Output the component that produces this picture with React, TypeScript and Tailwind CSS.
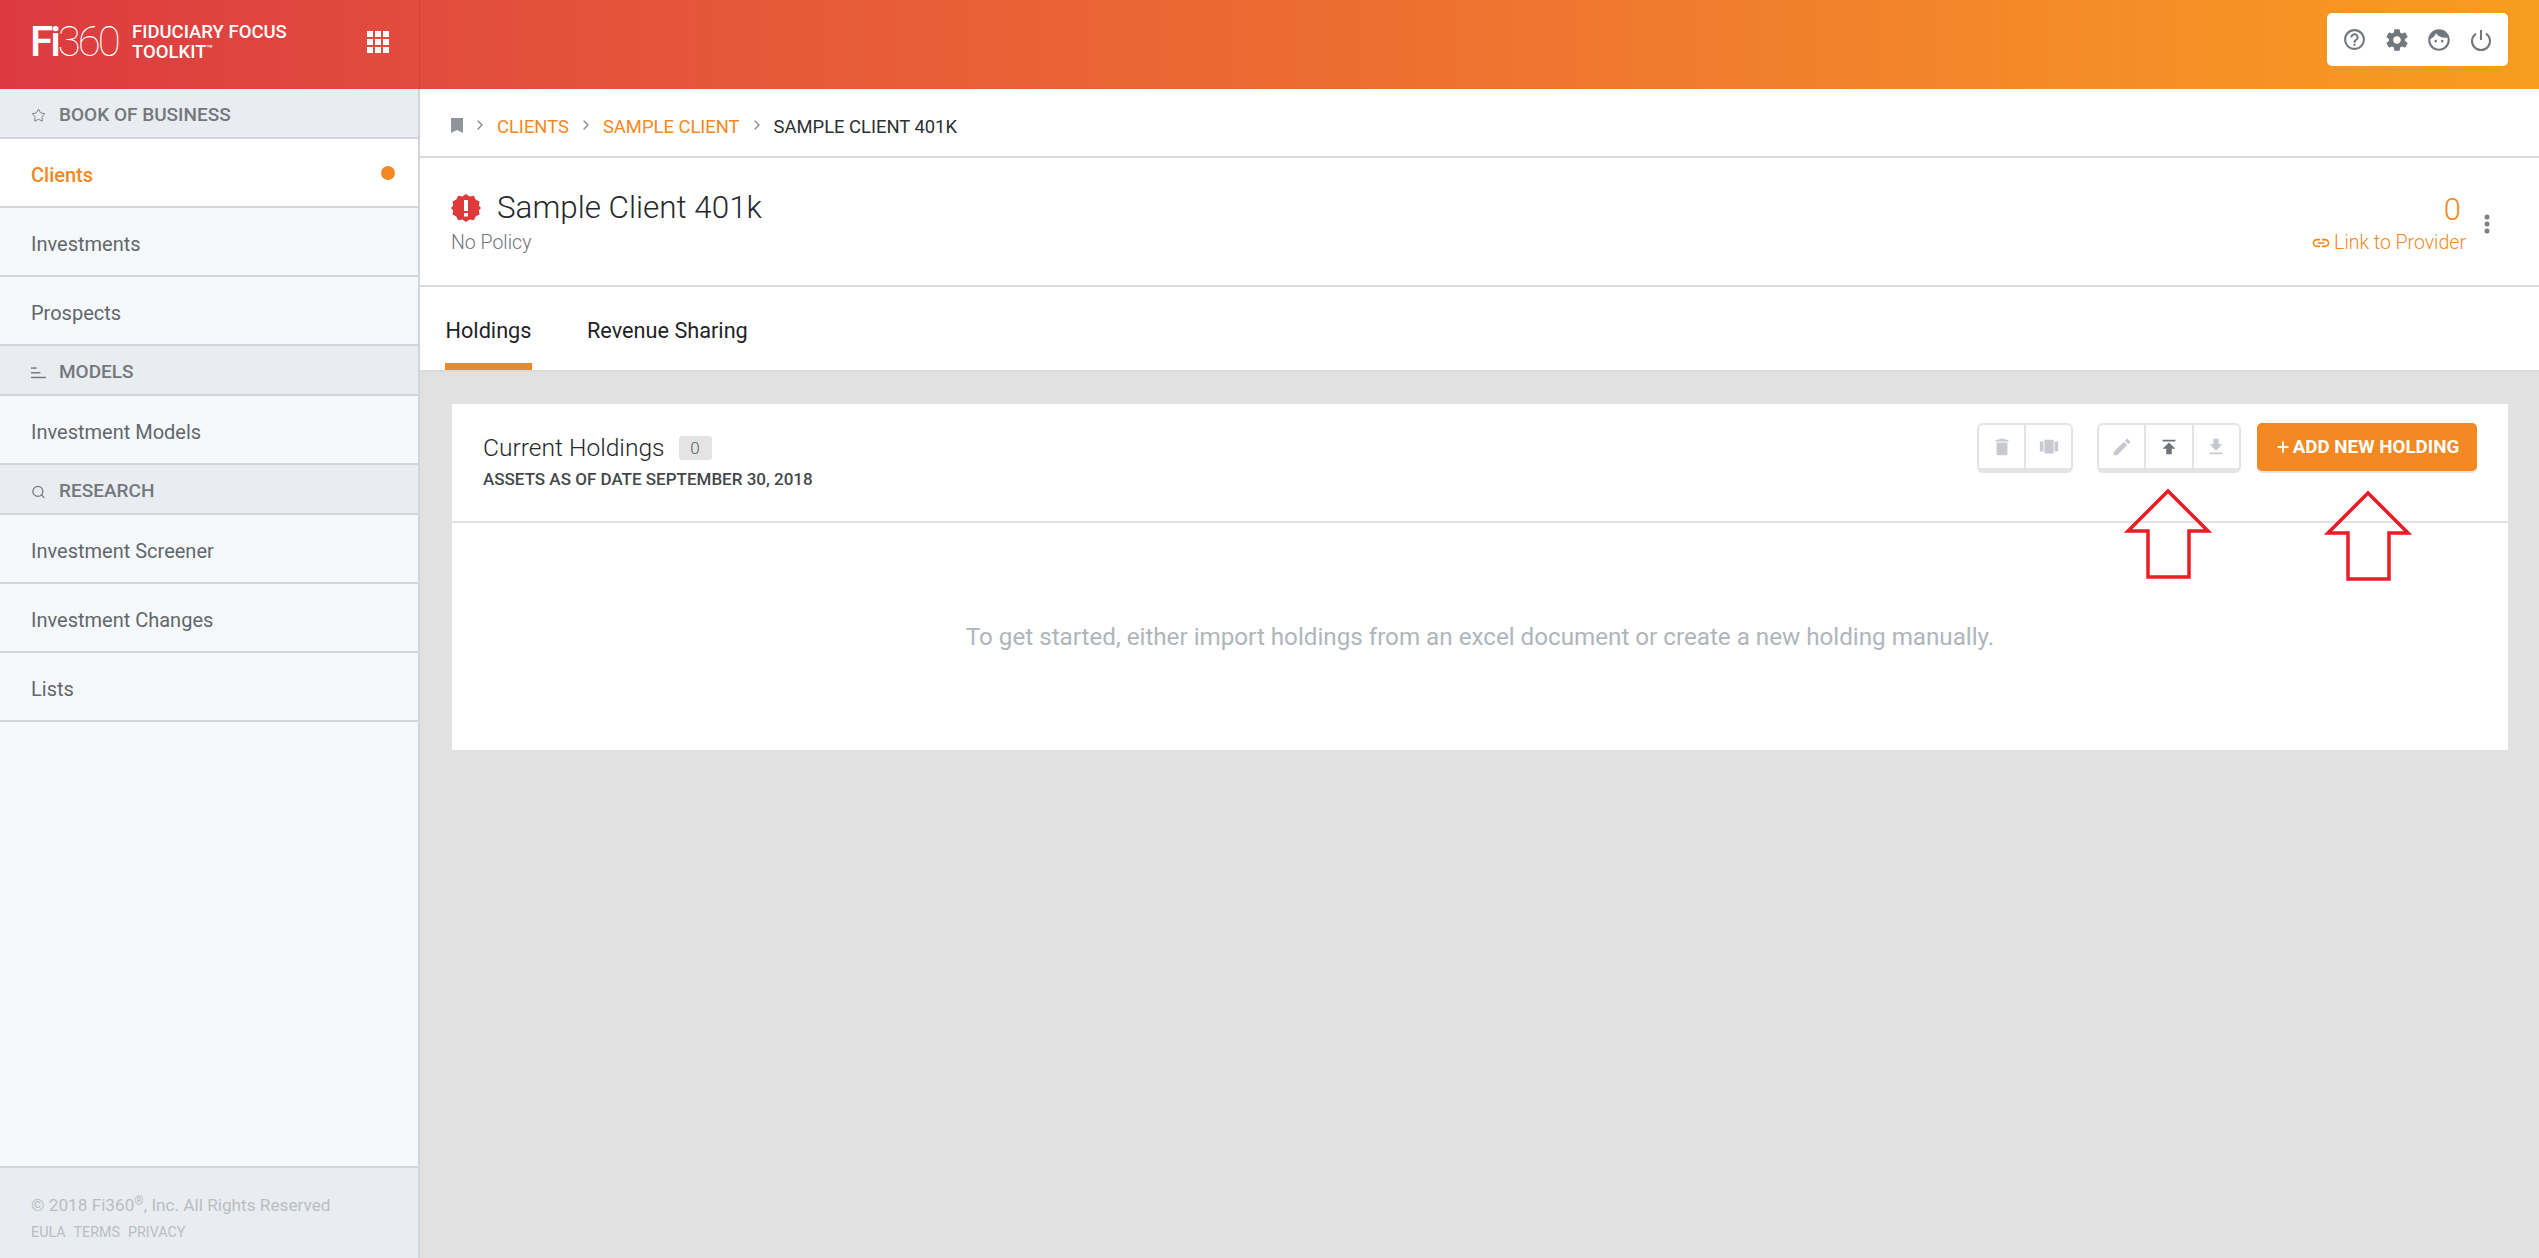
import { Star, Search, ChevronRight, Plus } from 'lucide-react'
import type { ReactNode } from 'react'

const SectionHead = ({ icon, label }: { icon: ReactNode; label: string }) => (
  <div className="flex h-[50px] items-center gap-[13px] border-b-2 border-[#d2d6db] bg-[#e9edf1] pl-[31px] pt-[5px] text-[19px] font-medium text-[#73787d]">
    <span className="flex w-[15px] justify-center">{icon}</span>
    {label}
  </div>
)

const NavItem = ({ label, active }: { label: string; active?: boolean }) => (
  <div
    className={`flex h-[69px] items-center justify-between border-b-2 border-[#d2d6db] pl-[31px] pr-[23px] pt-[4px] text-[20px] ${
      active ? 'bg-white font-medium text-[#f38822]' : 'bg-[#f5f9fc] text-[#62676c]'
    }`}
  >
    {label}
    {active && <span className="mb-[4px] h-[14px] w-[14px] rounded-full bg-[#f38822]" />}
  </div>
)

const ToolBtn = ({ children, last }: { children: ReactNode; last?: boolean }) => (
  <div className={`flex h-full flex-1 items-center justify-center ${last ? '' : 'border-r-2 border-[#e3e4e6]'}`}>
    {children}
  </div>
)

const Arrow = ({ className }: { className: string }) => (
  <svg className={`absolute ${className}`} width="92" height="96" viewBox="0 0 92 96">
    <path d="M46 6 L86 46 H67 V92 H26 V46 H6 Z" fill="none" stroke="#ed1c24" strokeWidth="3.5" />
  </svg>
)

const Crumb = () => <ChevronRight size={16} className="mx-[9px] mb-[3px] text-[#868b90]" />

export default function App() {
  return (
    <div className="relative flex h-[1258px] w-[2539px] flex-col overflow-hidden bg-[#e1e1e1] font-['Roboto',sans-serif]">
      {/* top bar */}
      <header className="flex h-[89px] items-center bg-gradient-to-r from-[#dc3a40] via-[#ec6a32] to-[#f89d1e]">
        <div className="flex h-full w-[420px] items-center border-r border-[#cf4439] pb-[5px] pl-[30px]">
          <span className="w-[89px] text-[42px] leading-none tracking-[-3px] text-white">
            <span className="font-medium">Fi</span>
            <span className="font-thin">360</span>
          </span>
          <div className="ml-[13px] w-[175px] text-[18.5px] font-medium leading-[20px] text-white">
            <div>FIDUCIARY FOCUS</div>
            <div>
              TOOLKIT<span className="relative top-[-6px] text-[10px] leading-none">™</span>
            </div>
          </div>
          <svg className="ml-[60px]" width="22" height="22" viewBox="0 0 22 22" fill="#fff">
            <rect x="0" y="0" width="6" height="6" />
            <rect x="8" y="0" width="6" height="6" />
            <rect x="16" y="0" width="6" height="6" />
            <rect x="0" y="8" width="6" height="6" />
            <rect x="8" y="8" width="6" height="6" />
            <rect x="16" y="8" width="6" height="6" />
            <rect x="0" y="16" width="6" height="6" />
            <rect x="8" y="16" width="6" height="6" />
            <rect x="16" y="16" width="6" height="6" />
          </svg>
        </div>
        <div className="mb-[10px] ml-auto mr-[31px] flex h-[53px] w-[181px] items-center justify-between rounded-[5px] bg-white px-[15px]">
          {/* help */}
          <svg width="25" height="25" viewBox="0 0 24 24" fill="#73787d">
            <path d="M11 18h2v-2h-2v2zm1-16C6.48 2 2 6.48 2 12s4.48 10 10 10 10-4.48 10-10S17.52 2 12 2zm0 18c-4.41 0-8-3.59-8-8s3.59-8 8-8 8 3.59 8 8-3.59 8-8 8zm0-14c-2.21 0-4 1.79-4 4h2c0-1.1.9-2 2-2s2 .9 2 2c0 2-3 1.75-3 5h2c0-2.25 3-2.5 3-5 0-2.21-1.79-4-4-4z" />
          </svg>
          {/* settings */}
          <svg width="26" height="26" viewBox="0 0 24 24" fill="#73787d">
            <path d="M19.43 12.98c.04-.32.07-.64.07-.98s-.03-.66-.07-.98l2.11-1.65c.19-.15.24-.42.12-.64l-2-3.46c-.12-.22-.39-.3-.61-.22l-2.49 1c-.52-.4-1.08-.73-1.69-.98l-.38-2.65C14.46 2.18 14.25 2 14 2h-4c-.25 0-.46.18-.49.42l-.38 2.65c-.61.25-1.17.59-1.69.98l-2.49-1c-.23-.09-.49 0-.61.22l-2 3.46c-.13.22-.07.49.12.64l2.11 1.65c-.04.32-.07.65-.07.98s.03.66.07.98l-2.11 1.65c-.19.15-.24.42-.12.64l2 3.46c.12.22.39.3.61.22l2.49-1c.52.4 1.08.73 1.69.98l.38 2.65c.03.24.24.42.49.42h4c.25 0 .46-.18.49-.42l.38-2.65c.61-.25 1.17-.59 1.69-.98l2.49 1c.23.09.49 0 .61-.22l2-3.46c.12-.22.07-.49-.12-.64l-2.11-1.65zM12 15.5c-1.93 0-3.5-1.57-3.5-3.5s1.57-3.5 3.5-3.5 3.5 1.57 3.5 3.5-1.57 3.5-3.5 3.5z" />
          </svg>
          {/* face */}
          <svg width="26" height="26" viewBox="0 0 24 24" fill="#73787d">
            <path d="M9 11.75c-.69 0-1.25.56-1.25 1.25s.56 1.25 1.25 1.25 1.25-.56 1.25-1.25-.56-1.25-1.25-1.25zm6 0c-.69 0-1.25.56-1.25 1.25s.56 1.25 1.25 1.25 1.25-.56 1.25-1.25-.56-1.25-1.25-1.25zM12 2C6.48 2 2 6.48 2 12s4.48 10 10 10 10-4.48 10-10S17.52 2 12 2zm0 18c-4.41 0-8-3.59-8-8 0-.29.02-.58.05-.86 2.36-1.05 4.23-2.98 5.21-5.37C11.07 8.33 14.05 10 17.42 10c.78 0 1.53-.09 2.25-.26.21.71.33 1.47.33 2.26 0 4.41-3.59 8-8 8z" />
          </svg>
          {/* power */}
          <svg width="24" height="24" viewBox="0 0 24 24" fill="none" stroke="#73787d" strokeWidth="2">
            <path d="M12 2v10" />
            <path d="M7 5.6a9 9 0 1 0 10 0" />
          </svg>
        </div>
      </header>

      <div className="flex min-h-0 flex-1">
        {/* sidebar */}
        <aside className="flex w-[420px] flex-col border-r-2 border-[#d2d6db] bg-[#f5f9fc]">
          <SectionHead icon={<Star size={17} strokeWidth={1.5} />} label="BOOK OF BUSINESS" />
          <NavItem label="Clients" active />
          <NavItem label="Investments" />
          <NavItem label="Prospects" />
          <SectionHead
            icon={
              <svg width="16" height="14" viewBox="0 0 16 14" fill="#73787d">
                <rect x="0" y="1" width="6" height="1.5" />
                <rect x="0" y="6" width="10" height="1.5" />
                <rect x="0" y="11" width="16" height="1.5" />
              </svg>
            }
            label="MODELS"
          />
          <NavItem label="Investment Models" />
          <SectionHead icon={<Search size={16} strokeWidth={2} />} label="RESEARCH" />
          <NavItem label="Investment Screener" />
          <NavItem label="Investment Changes" />
          <NavItem label="Lists" />
          <div className="mt-auto h-[92px] border-t-2 border-[#d2d6db] bg-[#e9edf1] pl-[31px] pt-[25px] text-[#b9bdc1]">
            <div className="text-[17.2px] leading-[24px]">
              © 2018 Fi360<span className="relative top-[-6px] text-[12px] leading-none">®</span>, Inc. All Rights Reserved
            </div>
            <div className="mt-[5px] flex gap-[8px] text-[14.3px] leading-[20px]">
              <span>EULA</span>
              <span>TERMS</span>
              <span>PRIVACY</span>
            </div>
          </div>
        </aside>

        {/* main */}
        <main className="flex min-w-0 flex-1 flex-col">
          <div className="flex h-[69px] items-center border-b-2 border-[#d8dbdf] bg-white pl-[31px] pt-[8px] text-[18.4px]">
            <svg className="mb-[3px]" width="12" height="15" viewBox="0 0 12 15" fill="#8f959b">
              <path d="M0 0h12v15l-6-3-6 3z" />
            </svg>
            <Crumb />
            <span className="text-[#f38822]">CLIENTS</span>
            <Crumb />
            <span className="text-[#f38822]">SAMPLE CLIENT</span>
            <Crumb />
            <span className="text-[#2c2f33]">SAMPLE CLIENT 401K</span>
          </div>

          <div className="flex h-[129px] items-center justify-between border-b-2 border-[#d8dbdf] bg-white pl-[31px] pr-[48px]">
            <div>
              <div className="flex items-center gap-[16px]">
                <svg width="30" height="30" viewBox="0 0 30 30">
                  <path
                    fill="#de3a3c"
                    d="M15 1l3.600 2.400 4.200-.7 1.900 3.800 3.800 1.900-.7 4.200L30 15l-2.200 2.400.7 4.200-3.800 1.900-1.900 3.800-4.200-.7L15 29l-3.600-2.400-4.200.7-1.900-3.800-3.800-1.900.7-4.200L0 15l2.200-2.400-.7-4.200 3.800-1.900 1.900-3.800 4.200.7z"
                  />
                  <rect x="13" y="7" width="4" height="11" fill="#fff" />
                  <rect x="13" y="20" width="4" height="3.500" fill="#fff" />
                </svg>
                <span className="text-[31.4px] font-light leading-[40px] text-[#25282c]">Sample Client 401k</span>
              </div>
              <div className="pt-[3px] text-[19.5px] font-light leading-[24px] text-[#6f7479]">No Policy</div>
            </div>
            <div className="flex items-center gap-[17px] pt-[4px]">
              <div className="text-right">
                <div className="pr-[5px] text-[31px] font-light leading-[36px] text-[#f38822]">0</div>
                <div className="flex items-center gap-[3px] pt-[2px] text-[19.5px] font-light leading-[26px] text-[#f38822]">
                  <svg width="20" height="20" viewBox="0 0 24 24" fill="#f38822">
                    <path d="M3.900 12c0-1.710 1.390-3.100 3.100-3.100h4V7H7c-2.760 0-5 2.240-5 5s2.240 5 5 5h4v-1.900H7c-1.710 0-3.100-1.390-3.100-3.100zM8 13h8v-2H8v2zm9-6h-4v1.900h4c1.710 0 3.100 1.390 3.100 3.100s-1.390 3.100-3.100 3.100h-4V17h4c2.760 0 5-2.240 5-5s-2.240-5-5-5z" />
                  </svg>
                  Link to Provider
                </div>
              </div>
              <svg width="8" height="20" viewBox="0 0 8 20" fill="#7c7f83">
                <circle cx="4" cy="3" r="2.500" />
                <circle cx="4" cy="10" r="2.500" />
                <circle cx="4" cy="17" r="2.500" />
              </svg>
            </div>
          </div>

          <div className="flex h-[85px] items-stretch border-b-2 border-[#d8dbdf] bg-white pl-[25px] text-[21.7px] text-[#1f2327]">
            <div className="flex w-[87px] items-center justify-center border-b-[7px] border-[#f38822] pt-[13px]">Holdings</div>
            <div className="ml-[55px] flex items-center pt-[6px]">Revenue Sharing</div>
          </div>

          {/* card */}
          <section className="ml-[32px] mr-[31px] mt-[32px] h-[346px] bg-white">
            <div className="flex h-[119px] items-start justify-between border-b-2 border-[#e1e1e1] px-[31px] pt-[19px]">
              <div className="pt-[11px]">
                <div className="flex items-center gap-[14px] text-[24.6px] font-light leading-[28px] text-[#25282c]">
                  Current Holdings
                  <span className="flex h-[24px] w-[33px] items-center justify-center rounded-[3px] bg-[#e4e4e4] text-[17px] text-[#55595d]">0</span>
                </div>
                <div className="mt-[7px] text-[17px] font-medium leading-[20px] text-[#44484c]">ASSETS AS OF DATE SEPTEMBER 30, 2018</div>
              </div>
              <div className="flex">
                <div className="flex h-[50px] w-[96px] overflow-hidden rounded-[6px] border-2 border-b-[5px] border-[#e3e4e6]">
                  <ToolBtn>
                    <svg width="22" height="22" viewBox="0 0 24 24" fill="#c6cad0">
                      <path d="M6 19c0 1.100.9 2 2 2h8c1.100 0 2-.9 2-2V7H6v12zM19 4h-3.500l-1-1h-5l-1 1H5v2h14V4z" />
                    </svg>
                  </ToolBtn>
                  <ToolBtn last>
                    <svg width="22" height="22" viewBox="0 0 24 24" fill="#c6cad0">
                      <path d="M7 19h10V4H7v15zm-5-2h4V6H2v11zm16-11v11h4V6h-4z" />
                    </svg>
                  </ToolBtn>
                </div>
                <div className="ml-[24px] flex h-[50px] w-[144px] overflow-hidden rounded-[6px] border-2 border-b-[5px] border-[#e3e4e6]">
                  <ToolBtn>
                    <svg width="22" height="22" viewBox="0 0 24 24" fill="#c6cad0">
                      <path d="M3 17.250V21h3.750L17.810 9.940l-3.750-3.750L3 17.250zM20.710 7.040a1 1 0 0 0 0-1.410l-2.340-2.340a1 1 0 0 0-1.410 0l-1.830 1.830 3.750 3.750 1.830-1.830z" />
                    </svg>
                  </ToolBtn>
                  <ToolBtn>
                    <svg width="22" height="22" viewBox="0 0 24 24" fill="#6e7378">
                      <path d="M5 4v2h14V4H5zm0 10h4v6h6v-6h4l-7-7-7 7z" />
                    </svg>
                  </ToolBtn>
                  <ToolBtn last>
                    <svg width="22" height="22" viewBox="0 0 24 24" fill="#c6cad0">
                      <path d="M19 9h-4V3H9v6H5l7 7 7-7zM5 18v2h14v-2H5z" />
                    </svg>
                  </ToolBtn>
                </div>
                <div className="ml-[16px] flex h-[48px] w-[220px] items-center justify-center gap-[2px] rounded-[5px] bg-[#f28923] text-[18.8px] font-bold text-white shadow-[0_2px_0_#e3e4e6]">
                  <Plus size={16} strokeWidth={3} />
                  ADD NEW HOLDING
                </div>
              </div>
            </div>
            <div className="flex h-[225px] items-center justify-center pt-[4px] text-[24.2px] text-[#aeb6bd]">
              To get started, either import holdings from an excel document or create a new holding manually.
            </div>
          </section>
        </main>
      </div>

      <Arrow className="left-[2122px] top-[485px]" />
      <Arrow className="left-[2322px] top-[487px]" />
    </div>
  )
}
